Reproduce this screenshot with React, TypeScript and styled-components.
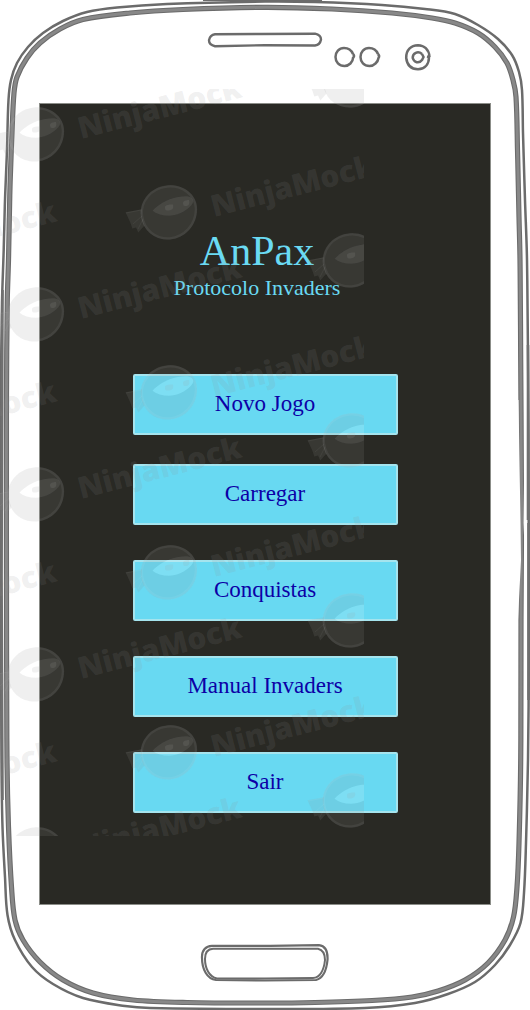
import React from "react";
import styled, { createGlobalStyle } from "styled-components";

const GlobalStyle = createGlobalStyle`
  *, *::before, *::after { box-sizing: border-box; }
  body { margin: 0; background: #ffffff; }
`;

const serif = `"Liberation Serif", "Times New Roman", serif`;

const Phone = styled.div`
  position: relative;
  width: 100%;
  padding: 103px 39px 105px;
  overflow: hidden;
`;

const FrameDrawing = styled.svg`
  position: absolute;
  inset: 0;
  width: 100%;
  height: 100%;
`;

const Screen = styled.main`
  position: relative;
  display: flex;
  flex-direction: column;
  align-items: center;
  padding: 123px 24px 91px;
  border: 1px solid #8b8d88;
  background: #292924;
  font-family: ${serif};
`;

const Heading = styled.header`
  padding-right: 16px;
  color: #6adaf3;
  text-align: center;
`;

const Title = styled.h1`
  margin: 0;
  font-size: 42px;
  font-weight: 400;
  line-height: 48px;
`;

const Subtitle = styled.p`
  margin: 0;
  font-size: 22px;
  line-height: 26px;
`;

const Menu = styled.nav`
  display: flex;
  flex-direction: column;
  gap: 35px;
  width: 265px;
  max-width: 100%;
  margin-top: 73px;
`;

const GameGroup = styled.div`
  display: flex;
  flex-direction: column;
  gap: 29px;
`;

const MenuButton = styled.button`
  width: 100%;
  height: 61px;
  padding: 0 0 2px;
  border: 2px solid #a5e4ee;
  border-radius: 2px;
  background: #68d9f2;
  color: #0c00a6;
  font-family: ${serif};
  font-size: 23px;
  line-height: 26px;
  cursor: pointer;
`;

const WatermarkLayer = styled.svg`
  position: absolute;
  top: 89px;
  left: 0;
  width: 364px;
  height: 747px;
  pointer-events: none;
`;

type Point = [number, number];

/* Turns a closed list of points into a smooth outline. */
function smooth(points: Point[]): string {
  const n = points.length;
  let d = `M${points[0][0]} ${points[0][1]}`;
  for (let i = 0; i < n; i += 1) {
    const a = points[(i - 1 + n) % n];
    const b = points[i];
    const c = points[(i + 1) % n];
    const e = points[(i + 2) % n];
    const len = Math.hypot(c[0] - b[0], c[1] - b[1]);
    const tb = Math.hypot(c[0] - a[0], c[1] - a[1]);
    const tc = Math.hypot(e[0] - b[0], e[1] - b[1]);
    const k = len / 3;
    d += ` C${b[0] + ((c[0] - a[0]) / tb) * k} ${b[1] + ((c[1] - a[1]) / tb) * k} ${c[0] - ((e[0] - b[0]) / tc) * k} ${c[1] - ((e[1] - b[1]) / tc) * k} ${c[0]} ${c[1]}`;
  }
  return `${d} Z`;
}

const outerEdge = smooth([
  [265, 1.5], [315, 2], [382, 5], [425, 9], [455, 14], [478, 25], [498, 39],
  [512, 55], [519, 72], [522, 90], [523, 133], [525, 200], [527, 260],
  [528.5, 425], [528.7, 520], [528.7, 680], [528, 760], [526, 843], [524, 893],
  [520.5, 923], [510, 945], [495, 965], [475, 982], [448, 994], [415, 1003],
  [365, 1008], [265, 1009], [150, 1008], [125, 1006], [83, 998], [53, 984],
  [32, 967], [15, 940], [7.5, 915], [5, 877], [2.5, 827], [1.5, 760],
  [1, 600], [1, 393], [2, 303], [3.7, 250], [5, 200], [7, 150], [8.5, 100],
  [11, 80], [17, 63], [28, 47], [43, 33], [63, 21], [87, 12], [117, 7.5],
  [167, 4],
]);

const innerEdge = smooth([
  [265, 7.3], [332, 9], [392, 13], [432, 18], [455, 23], [478, 33], [495, 47],
  [507, 63], [513, 80], [516, 97], [517.5, 150], [519, 217], [520, 260],
  [520.7, 360], [521.5, 520], [521, 620], [520.7, 760], [519, 843],
  [517, 887], [513.5, 917], [505, 940], [488, 963], [465, 980], [438, 991],
  [412, 997], [372, 1000.5], [315, 1002.5], [265, 1003], [187, 1002.5],
  [133, 1000], [93, 993], [63, 980], [40, 962], [23, 940], [15, 920],
  [11.5, 887], [8.5, 827], [7, 760], [6.5, 600], [6.5, 393], [7.3, 300],
  [8.5, 260], [10, 187], [12, 133], [14, 93], [17, 77], [27, 58], [40, 43],
  [60, 29], [83, 19.5], [130, 13], [183, 9.5],
]);

function PhoneFrame() {
  return (
    <FrameDrawing viewBox="0 0 530 1010" preserveAspectRatio="none" fill="none" stroke="#6b6b6b" aria-hidden="true">
      <path d={outerEdge} strokeWidth="2.5" />
      <path d={innerEdge} strokeWidth="5.2" />
      <path d={innerEdge} stroke="#888888" strokeWidth="3" />
      <path d="M2.500 290C1.200 400 1.200 650 2.500 800M528 345V520M528.500 523V700" strokeWidth="2.6" stroke="#707070" />
      <path d="M517 400L518.500 400L520.500 522L521 560L518 620H517ZM524.500 440L525 560L523.500 523Z" fill="#ffffff" stroke="none" />
      <path d="M203 .5H322" strokeWidth="1" />
      <path d="M215 34.3L260 34L315 33.7Q321 35 321 39.5Q320 45 315 45.5L265 45.2L215 46.2Q209 45 209 40.3Q210 35 215 34.3Z" strokeWidth="2.4" />
      <g strokeWidth="2.5">
        <path d="M353 54C351 49 347 48 344 48C339 48 335.5 52 335.5 57C335.5 62 339 66 344.5 66C349 66 353 62 353 58Q355 56 353 54" />
        <path d="M378 54C376 49 372 48 369 48C364 48 360.500 52 360.500 57C360.500 62 364 66 369.500 66C374 66 378 62 378.500 58Q380 56 378 54" />
        <path d="M429.500 57C429 49 424 45.500 418 45.300C411 45.500 406 50 406.200 58C407 65 411 69 418 69.300C425 69 429 64 429 57L427 56.500" />
        <path d="M422 54C418 50.500 412.500 53 412.700 58C414 62.500 419 64 422 60L423.500 57L422 54" />
      </g>
      <path d="M212 945.8H270L319 945.2C325 946 328 951 327.500 960C326.500 970 324 978 316 980L265 980.5L216 980C207 979 202 969 202 958C201.500 950 206 946 212 945.8Z" strokeWidth="2.2" />
      <path d="M213 948.8H318C323 950 325 954 325 960C324 970 320 978 313 978L265 978.500H217C209 977 205 968 205 959C205 952 208 949 213 948.8Z" strokeWidth="2" />
    </FrameDrawing>
  );
}

const columns: Point[] = [[-149, 78], [36, 134], [169, 32], [351, 80]];
const marks: Point[] = columns.flatMap(([x, y]) =>
  [0, 1, 2, 3, 4].map((step): Point => [x, y + step * 180]),
);

const eyeBand = "M-16.500 -1.300C-12 -6 -3 -13 9 -15C15 -16 21 -16 22.500 -14C25 -12 24.500 -9 22.500 -7C17 0 7 3.700 0 3.700C-7 3.700 -12 2 -16.500 -1.300Z";

function NinjaMark({ x, y }: { x: number; y: number }) {
  return (
    <g transform={`translate(${x} ${y})`}>
      <g fill="#909090" fillOpacity="0.145">
        <path d="M-43.500 .3L-27 -2.700L-27.500 4L-24.500 13.500L-30.700 20.500L-33 15.500L-36.700 16.500L-38.500 11Z" />
        <path
          fillRule="evenodd"
          d={`M-28 4C-30 -11 -18 -25 -2 -26.500C14 -28 28 -18 28 -3C28 14 16 26 1 27.500C-14 28.500 -26 19 -28 4Z${eyeBand}`}
        />
        <text
          x="0"
          y="0"
          transform="translate(45 5) rotate(-14.5)"
          fontFamily="'Open Sans', 'Noto Sans', sans-serif"
          fontSize="30"
          fontWeight="800"
        >
          NinjaMock
        </text>
        <path d="M-4 -4.500C-4.500 -7 0 -8 4 -7.500C5 -3 3 -1.500 -2 -1.500C-4 -1.500 -4 -3 -4 -4.500ZM14 -8.500C13.500 -11 17 -12 20 -12C21 -8 20 -6 16 -6Q14 -6 14 -8.500Z" />
      </g>
      <path
        d="M-27 4C-29 -10 -18 -24 -2 -25.500C13 -27 27 -17 27 -3C27 13 15 25 1 26.500C-13 27.500 -25 18 -27 4Z"
        fill="none"
        stroke="#ffffff"
        strokeOpacity="0.06"
        strokeWidth="2.5"
      />
      <path d={eyeBand} fill="#ffffff" fillOpacity="0.14" />
      <path d="M-27 4L-36 12M-26 7L-31 17M-43 1L-28 -2" stroke="#ffffff" strokeOpacity="0.05" />
    </g>
  );
}

function Watermark() {
  return (
    <WatermarkLayer viewBox="0 89 364 747" aria-hidden="true">
      {marks.map(([x, y]) => (
        <NinjaMark key={`${x}-${y}`} x={x} y={y} />
      ))}
    </WatermarkLayer>
  );
}

export default function App() {
  return (
    <>
      <GlobalStyle />
      <Phone>
        <PhoneFrame />
        <Screen>
          <Heading>
            <Title>AnPax</Title>
            <Subtitle>Protocolo Invaders</Subtitle>
          </Heading>
          <Menu aria-label="Menu">
            <GameGroup>
              <MenuButton type="button">Novo Jogo</MenuButton>
              <MenuButton type="button">Carregar</MenuButton>
            </GameGroup>
            <MenuButton type="button">Conquistas</MenuButton>
            <MenuButton type="button">Manual Invaders</MenuButton>
            <MenuButton type="button">Sair</MenuButton>
          </Menu>
        </Screen>
        <Watermark />
      </Phone>
    </>
  );
}
